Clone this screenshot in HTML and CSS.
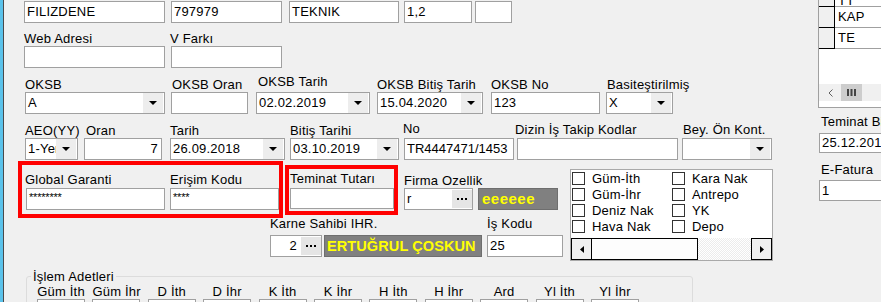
FILE: index.html
```html
<!DOCTYPE html>
<html lang="tr">
<head>
<meta charset="utf-8">
<title>Firma</title>
<link rel="stylesheet" href="styles.css">
</head>
<body>
<div class="app">
  <div class="edge"></div>
  <div class="main">
    <div class="row r1">
      <div class="box f-name">FILIZDENE</div>
      <div class="box f-code">797979</div>
      <div class="box f-dept">TEKNIK</div>
      <div class="box f-rate">1,2</div>
      <div class="box f-blank"></div>
    </div>

    <div class="row r2">
      <div class="fld f-web"><div class="lbl">Web Adresi</div><div class="box"></div></div>
      <div class="fld f-vfark"><div class="lbl out1">V Farkı</div><div class="box"></div></div>
    </div>

    <div class="row r3">
      <div class="fld f-oksb"><div class="lbl">OKSB</div><div class="combo"><span class="val">A</span><span class="dd"></span></div></div>
      <div class="fld f-oksboran"><div class="lbl in1">OKSB Oran</div><div class="box"></div></div>
      <div class="fld f-oksbtarih"><div class="lbl in2 up3">OKSB Tarih</div><div class="combo"><span class="val">02.02.2019</span><span class="dd"></span></div></div>
      <div class="fld f-oksbbitis"><div class="lbl">OKSB Bitiş Tarih</div><div class="combo"><span class="val">15.04.2020</span><span class="dd"></span></div></div>
      <div class="fld f-oksbno"><div class="lbl">OKSB No</div><div class="box">123</div></div>
      <div class="fld f-basit"><div class="lbl in1">Basiteştirilmiş</div><div class="combo"><span class="val">X</span><span class="dd"></span></div></div>
    </div>

    <div class="row r4">
      <div class="fld f-aeo"><div class="lbl">AEO(YY)</div><div class="combo"><span class="val">1-Yerli</span><span class="dd"></span></div></div>
      <div class="fld f-oran"><div class="lbl in2">Oran</div><div class="box right">7</div></div>
      <div class="fld f-tarih"><div class="lbl">Tarih</div><div class="combo"><span class="val">26.09.2018</span><span class="dd"></span></div></div>
      <div class="fld f-bitis"><div class="lbl">Bitiş Tarihi</div><div class="combo"><span class="val">03.10.2019</span><span class="dd"></span></div></div>
      <div class="fld f-no"><div class="lbl out1 up2">No</div><div class="box">TR4447471/1453</div></div>
      <div class="fld f-dizin"><div class="lbl out2 up1">Dizin İş Takip Kodlar</div><div class="box"></div></div>
      <div class="fld f-bey"><div class="lbl in1 up1">Bey. Ön Kont.</div><div class="combo"><span class="val"></span><span class="dd"></span></div></div>
    </div>

    <div class="row5">
      <div class="left5">
        <div class="subA">
          <div class="red red1">
            <div class="fld f-gg"><div class="lbl out1">Global Garanti</div><div class="box stars">********</div></div>
            <div class="fld f-ek"><div class="lbl">Erişim Kodu</div><div class="box stars">****</div></div>
          </div>
          <div class="red red2">
            <div class="fld f-tt"><div class="lbl">Teminat Tutarı</div><div class="box tall21"></div></div>
          </div>
          <div class="fld f-firma"><div class="lbl">Firma Ozellik</div><div class="pick"><span class="val">r</span><span class="dots"><i></i><i></i><i></i></span></div></div>
          <div class="tag f-eee">eeeeee</div>
        </div>
        <div class="subB">
          <div class="fld f-karne"><div class="lbl">Karne Sahibi IHR.</div><div class="pick"><span class="val right">2</span><span class="dots"><i></i><i></i><i></i></span></div></div>
          <div class="tag f-ert">ERTUĞRUL ÇOSKUN</div>
          <div class="fld f-iskodu"><div class="lbl">İş Kodu</div><div class="box">25</div></div>
        </div>
      </div>

      <div class="panel">
        <div class="checks">
          <div class="chk"><span class="cb"></span>Güm-İth</div>
          <div class="chk"><span class="cb"></span>Kara Nak</div>
          <div class="chk"><span class="cb"></span>Güm-İhr</div>
          <div class="chk"><span class="cb"></span>Antrepo</div>
          <div class="chk"><span class="cb"></span>Deniz Nak</div>
          <div class="chk"><span class="cb"></span>YK</div>
          <div class="chk"><span class="cb"></span>Hava Nak</div>
          <div class="chk"><span class="cb"></span>Depo</div>
        </div>
        <div class="csb">
          <div class="cbtn"><svg width="4" height="7" viewBox="0 0 4 7"><polygon points="4,0 0,3.5 4,7" fill="#000"/></svg></div>
          <div class="cthumb"></div>
          <div class="ctrack"></div>
          <div class="cbtn"><svg width="4" height="7" viewBox="0 0 4 7"><polygon points="0,0 4,3.5 0,7" fill="#000"/></svg></div>
        </div>
      </div>
    </div>

    <div class="group">
      <div class="gtitle">İşlem Adetleri</div>
      <div class="gcols">
        <div class="gl">Güm İth</div><div class="gl">Güm İhr</div><div class="gl">D İth</div><div class="gl">D İhr</div><div class="gl">K İth</div><div class="gl">K İhr</div><div class="gl">H İth</div><div class="gl">H İhr</div><div class="gl">Ard</div><div class="gl">Yl İth</div><div class="gl">Yl İhr</div>
        <div class="box"></div><div class="box"></div><div class="box"></div><div class="box"></div><div class="box"></div><div class="box"></div><div class="box"></div><div class="box"></div><div class="box"></div><div class="box"></div><div class="box"></div>
      </div>
    </div>
  </div>

  <div class="side">
    <div class="grid">
      <div class="grow cut"><div class="rh"></div><div class="cell">TT</div></div>
      <div class="grow"><div class="rh"></div><div class="cell">KAP</div></div>
      <div class="grow"><div class="rh"></div><div class="cell">TE</div></div>
      <div class="gspace"></div>
      <div class="hs">
        <div class="hsbtn"><svg width="5" height="8" viewBox="0 0 5 8"><polyline points="4.5,0.5 1,4 4.5,7.5" fill="none" stroke="#606060" stroke-width="1"/></svg></div>
        <div class="hsthumb"><svg width="9" height="7" viewBox="0 0 9 7"><rect x="0" y="0" width="2" height="7" fill="#444"/><rect x="3.5" y="0" width="2" height="7" fill="#444"/><rect x="7" y="0" width="2" height="7" fill="#444"/></svg></div>
      </div>
    </div>
    <div class="lbl s-lbl1">Teminat Bitiş</div>
    <div class="box s-box1">25.12.2018</div>
    <div class="lbl s-lbl2">E-Fatura</div>
    <div class="box s-box2">1</div>
  </div>
</div>
</body>
</html>
```

FILE: styles.css
```css
* { box-sizing: border-box; }

html, body {
  margin: 0;
  padding: 0;
}

body {
  width: 881px;
  height: 302px;
  overflow: hidden;
  background: #f0f0f0;
  color: #000;
  font: 13px/15px "Liberation Sans", Arial, sans-serif;
  letter-spacing: 0.2px;
}

.app {
  display: flex;
  height: 302px;
}

.edge {
  flex: none;
  width: 4px;
  background: #5bc2ea;
  border-right: 1px solid #4a4a4a;
}

.main {
  flex: none;
  width: 814px;
}

.side {
  flex: none;
  width: 63px;
  overflow: hidden;
}

/* ---------- generic controls ---------- */
.row {
  display: flex;
  align-items: flex-end;
}

.fld {
  flex: none;
  display: flex;
  flex-direction: column;
}

.lbl {
  height: 15px;
  white-space: nowrap;
}
.in1 { padding-left: 1px; }
.in2 { padding-left: 2px; }
.out1 { margin-left: -1px; }
.out2 { margin-left: -2px; }
.up1 { margin-bottom: 1px; }
.up2 { margin-bottom: 2px; }
.up3 { margin-bottom: 3px; }

.box {
  flex: none;
  height: 22px;
  background: #fff;
  border: 1px solid #a0a0a0;
  padding: 0 2px;
  line-height: 20px;
  white-space: nowrap;
  overflow: hidden;
}
.box.right { text-align: right; padding-right: 3px; }

.combo, .pick {
  display: flex;
  height: 22px;
  background: #fff;
  border: 1px solid #a0a0a0;
}
.val {
  flex: 1;
  min-width: 0;
  padding-left: 2px;
  line-height: 20px;
  white-space: nowrap;
  overflow: hidden;
}
.val.right { text-align: right; padding-right: 4px; }

.dd {
  flex: none;
  width: 20px;
  margin-right: 1px;
  background: #ededed;
  display: flex;
  align-items: center;
  justify-content: center;
}
.dd::after {
  content: "";
  border-top: 4px solid #000;
  border-left: 4px solid transparent;
  border-right: 4px solid transparent;
}

.dots {
  flex: none;
  width: 20px;
  margin: 1px 0;
  background: #e5e5e5;
  display: flex;
  align-items: center;
  justify-content: center;
  gap: 2px;
}
.dots i {
  width: 2px;
  height: 2px;
  background: #000;
}

.tag {
  flex: none;
  height: 22px;
  background: #808080;
  border: 1px solid #6e6e6e;
  color: #ffff00;
  font-weight: bold;
  white-space: nowrap;
  overflow: hidden;
}

/* ---------- row 1 ---------- */
.r1 { height: 23px; }
.f-name  { margin-left: 20px; width: 141px; }
.f-code  { margin-left: 6px;  width: 111px; }
.f-dept  { margin-left: 7px;  width: 110px; }
.f-rate  { margin-left: 5px;  width: 68px; }
.f-blank { margin-left: 3px;  width: 37px; }

/* ---------- row 2 ---------- */
.r2 { height: 45px; }
.f-web   { margin-left: 20px; width: 141px; }
.f-vfark { margin-left: 6px;  width: 111px; }

/* ---------- row 3 ---------- */
.r3 { height: 46px; }
.f-oksb      { margin-left: 21px; width: 140px; }
.f-oksboran  { margin-left: 6px;  width: 77px; }
.f-oksbtarih { margin-left: 8px;  width: 114px; }
.f-oksbbitis { margin-left: 7px;  width: 106px; }
.f-oksbno    { margin-left: 8px;  width: 109px; }
.f-basit     { margin-left: 6px;  width: 67px; }

/* ---------- row 4 ---------- */
.r4 { height: 46px; }
.f-aeo   { margin-left: 21px; width: 53px; }
.f-oran  { margin-left: 6px;  width: 78px; }
.f-tarih { margin-left: 8px;  width: 115px; }
.f-bitis { margin-left: 5px;  width: 109px; }
.f-no    { margin-left: 5px;  width: 110px; }
.f-no .box { letter-spacing: 0; }
.f-dizin { margin-left: 3px;  width: 161px; }
.f-bey   { margin-left: 4px;  width: 90px; }

/* ---------- row 5 ---------- */
.row5 {
  display: flex;
  align-items: flex-start;
  height: 100px;
}
.left5 {
  flex: none;
  margin-left: 14px;
  width: 545px;
  display: flex;
  flex-direction: column;
}
.subA {
  display: flex;
  align-items: flex-start;
  height: 56px;
}
.red {
  flex: none;
  display: flex;
  border: 4px solid #ff0000;
}
.red1 {
  width: 265px;
  height: 57px;
  margin-top: 1px;
  padding-top: 7px;
}
.red1 .lbl { margin-bottom: 1px; }
.f-gg { margin-left: 4px; width: 139px; }
.f-ek { margin-left: 5px; width: 109px; }
.stars {
  font-size: 11px;
  line-height: 16px;
  letter-spacing: -0.2px;
}
.red2 {
  width: 113px;
  height: 50px;
  margin-left: 2px;
  margin-top: 5px;
  padding-top: 2px;
}
.red2 .lbl { margin-bottom: 2px; }
.f-tt { margin-left: 1px; width: 104px; }
.tall21 { height: 21px; }

.f-firma { margin-left: 6px; margin-top: 13px; width: 69px; }
.f-eee {
  margin-left: 5px;
  margin-top: 28px;
  width: 80px;
  font-size: 15px;
  line-height: 20px;
  letter-spacing: 0.5px;
  padding-left: 3px;
}

.subB {
  display: flex;
  align-items: flex-end;
  height: 41px;
}
.subB .lbl { margin-bottom: 4px; }
.f-karne  { margin-left: 252px; width: 52px; }
.f-ert {
  margin-left: 2px;
  width: 158px;
  font-size: 14.5px;
  line-height: 20px;
  letter-spacing: 0.1px;
  padding-left: 2px;
}
.f-iskodu { margin-left: 5px; width: 76px; }

.panel {
  flex: none;
  margin-left: 7px;
  margin-top: 9px;
  width: 203px;
  height: 92px;
  background: #fff;
  border: 1px solid #a9a9a9;
  display: flex;
  flex-direction: column;
}
.checks {
  height: 68px;
  padding: 1px 0 0 1px;
  display: grid;
  grid-template-columns: 100px 100px;
  grid-auto-rows: 16px;
}
.chk {
  display: flex;
  align-items: flex-start;
  white-space: nowrap;
}
.cb {
  flex: none;
  width: 13px;
  height: 13px;
  margin-top: 1px;
  margin-right: 7px;
  border: 1px solid #333;
  background: #fff;
}
.csb {
  display: flex;
  height: 22px;
}
.cbtn {
  flex: none;
  width: 21px;
  border: 1px solid #000;
  background: #f0f0f0;
  display: flex;
  align-items: center;
  justify-content: center;
}
.cthumb {
  flex: none;
  width: 106px;
  border: 1px solid #000;
  border-left-width: 0;
  background: #fdfdfd;
}
.ctrack {
  flex: 1;
  background: repeating-conic-gradient(#ececec 0 25%, #ffffff 0 50%) 0 0 / 2px 2px;
}

/* ---------- group ---------- */
.group {
  position: relative;
  margin-left: 22px;
  margin-top: 16px;
  width: 667px;
  height: 40px;
  border: 1px solid #dcdcdc;
  border-radius: 3px;
  padding: 7px 0 0 10px;
}
.gtitle {
  position: absolute;
  left: 4px;
  top: -8px;
  padding: 0 2px;
  background: #f0f0f0;
  white-space: nowrap;
}
.gcols {
  display: grid;
  grid-template-columns: repeat(11, 48px);
  column-gap: 7.4px;
  grid-template-rows: 15px 22px;
}
.gl {
  text-align: center;
  white-space: nowrap;
}

/* ---------- right side ---------- */
.grid {
  height: 108px;
  width: 80px;
  background: #fff;
  border-left: 1px solid #a0a0a0;
  border-bottom: 1px solid #a0a0a0;
  display: flex;
  flex-direction: column;
  overflow: hidden;
}
.grow {
  flex: none;
  display: flex;
  height: 21px;
}
.grow.cut { margin-top: -14px; }
.grow.cut .cell { line-height: 30px; }
.rh {
  flex: none;
  width: 16px;
  background: #f0f0f0;
  border-right: 1px solid #000;
  border-bottom: 1px solid #000;
}
.cell {
  flex: 1;
  border-bottom: 1px solid #a0a0a0;
  padding-left: 3px;
  line-height: 20px;
}
.gspace { flex: 1; }
.hs {
  flex: none;
  display: flex;
  height: 17px;
  margin-bottom: 6px;
  background: #f0f0f0;
}
.hsbtn {
  flex: none;
  width: 22px;
  display: flex;
  align-items: center;
  justify-content: center;
}
.hsthumb {
  flex: none;
  width: 21px;
  background: #cdcdcd;
  display: flex;
  align-items: center;
  justify-content: center;
}

.s-lbl1 { margin-top: 6px; margin-left: 3px; }
.s-box1 { margin-top: 4px; margin-left: 1px; width: 80px; height: 20px; line-height: 18px; }
.s-lbl2 { margin-top: 9px; margin-left: 3px; }
.s-box2 { margin-top: 3px; margin-left: 1px; width: 80px; height: 21px; line-height: 19px; }
```
